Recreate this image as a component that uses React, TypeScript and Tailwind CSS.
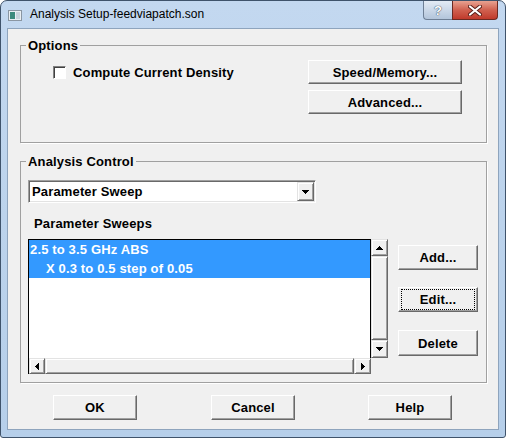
import React from "react";

type BtnProps = { label: string; className?: string; focus?: boolean };

const raised =
  "bg-[#f0f0f0] border border-t-white border-l-white border-b-[#696969] border-r-[#696969] shadow-[inset_-1px_-1px_0_#a0a0a0]";

const Btn = ({ label, className = "", focus = false }: BtnProps) => (
  <button
    className={`relative flex items-center justify-center text-[13px] font-bold leading-[15px] tracking-[0.15px] text-black ${raised} ${className}`}
  >
    {label}
    {focus && (
      <span className="absolute left-[2px] right-[2px] top-[1px] bottom-[1px] border border-dotted border-black" />
    )}
  </button>
);

const Arrow = ({ dir }: { dir: "up" | "down" | "left" | "right" }) => {
  const pts = {
    up: "0,4 7,4 3.5,0",
    down: "0,0 7,0 3.5,4",
    left: "4,0 4,7 0,3.5",
    right: "0,0 0,7 4,3.5",
  }[dir];
  const w = dir === "up" || dir === "down" ? 7 : 4;
  const h = dir === "up" || dir === "down" ? 4 : 7;
  return (
    <svg width={w} height={h} viewBox={`0 0 ${w} ${h}`} shapeRendering="crispEdges">
      <polygon points={pts} fill="#000" />
    </svg>
  );
};

const ScrollPart = ({ className = "", children }: { className?: string; children?: React.ReactNode }) => (
  <div
    className={`flex items-center justify-center bg-[#f0f0f0] border border-t-[#e3e3e3] border-l-[#e3e3e3] border-b-[#696969] border-r-[#696969] shadow-[inset_1px_1px_0_#fff,inset_-1px_-1px_0_#a0a0a0] ${className}`}
  >
    {children}
  </div>
);

const Group = ({ title, children, className = "" }: { title: string; children: React.ReactNode; className?: string }) => (
  <fieldset className={`mx-0 border border-[#a0a0a0] shadow-[1px_1px_0_#fff] ${className}`}>
    <legend className="ml-[5px] px-[2px] text-[13px] font-bold leading-[15px] tracking-[0.15px] text-black">
      {title}
    </legend>
    {children}
  </fieldset>
);

export default function App() {
  return (
    <div className="w-[506px] h-[438px] bg-white font-['Liberation_Sans',Arial,sans-serif] text-black">
      <div className="flex h-full flex-col rounded-t-[7px] rounded-b-[3px] border border-[#3f536b] bg-gradient-to-b from-[#c3d8f0] via-[#bcd3ec] to-[#b6cfea] px-[6px] pb-[7px]">
        {/* Title bar */}
        <div className="flex h-[27px] items-start">
          <svg className="ml-[1px] mt-[9px]" width="14" height="11" viewBox="0 0 14 11" shapeRendering="crispEdges">
            <rect x="0.5" y="0.5" width="13" height="10" fill="#e9eef3" stroke="#8a96a3" />
            <rect x="2" y="2" width="5" height="7" fill="#3d8a7d" />
            <rect x="8" y="2" width="4" height="7" fill="#c9d3dc" />
          </svg>
          <span className="ml-[8px] mt-[6px] text-[12px] leading-[15px] text-black">
            Analysis Setup-feedviapatch.son
          </span>
          <div className="ml-auto mr-[1px] flex h-[19px]">
            <div className="flex w-[29px] items-center justify-center rounded-bl-[4px] border border-t-0 border-r-0 border-[#6e7f95] bg-gradient-to-b from-[#e3ebf5] to-[#b3c5db] text-[13px] font-bold leading-none text-white [text-shadow:0_0_1px_#33475f,0_0_1px_#33475f]">
              ?
            </div>
            <div className="flex w-[46px] items-center justify-center rounded-br-[4px] border border-t-0 border-[#6b2a22] bg-gradient-to-b from-[#e8a291] via-[#d0604f] to-[#c0392b]">
              <svg width="14" height="11" viewBox="0 0 14 11">
                <path d="M2 1.5 L12 9.5 M12 1.5 L2 9.5" stroke="#5a1f18" strokeWidth="4" strokeLinecap="round" />
                <path d="M2 1.5 L12 9.5 M12 1.5 L2 9.5" stroke="#fff" strokeWidth="2.2" strokeLinecap="round" />
              </svg>
            </div>
          </div>
        </div>

        {/* Client area */}
        <div className="flex flex-1 flex-col border border-[#8ea4bd] bg-[#f0f0f0] pl-[12px] pr-[11px] pt-[9px]">
          <Group title="Options" className="h-[105px]">
            <div className="flex justify-between pl-[32px] pr-[24px] pt-[7px]">
              <div className="flex h-[24px] items-center">
                <span className="h-[13px] w-[13px] border border-t-[#808080] border-l-[#808080] border-b-white border-r-white bg-white shadow-[inset_1px_1px_0_#404040]" />
                <span className="ml-[7px] text-[13px] font-bold leading-[15px] tracking-[0.15px]">
                  Compute Current Density
                </span>
              </div>
              <div className="flex flex-col gap-[6px]">
                <Btn label="Speed/Memory..." className="h-[24px] w-[154px]" />
                <Btn label="Advanced..." className="h-[24px] w-[154px]" />
              </div>
            </div>
          </Group>

          <Group title="Analysis Control" className="mt-[11px] h-[229px]">
            <div className="pl-[7px] pt-[11px]">
              <div className="flex h-[23px] w-[288px] border border-t-[#a0a0a0] border-l-[#a0a0a0] border-b-white border-r-white bg-white shadow-[inset_1px_1px_0_#696969,inset_-1px_-1px_0_#e3e3e3]">
                <span className="flex-1 pl-[3px] pt-[3px] text-[13px] font-bold leading-[15px] tracking-[0.15px]">
                  Parameter Sweep
                </span>
                <ScrollPart className="my-[1px] mr-[1px] w-[17px]">
                  <Arrow dir="down" />
                </ScrollPart>
              </div>
              <div className="mt-[13px] pl-[6px] text-[13px] font-bold leading-[15px] tracking-[0.15px]">
                Parameter Sweeps
              </div>
              <div className="mt-[8px] flex items-start">
                <div className="grid w-[360px] grid-cols-[343px_17px] grid-rows-[119px_16px]">
                  <div className="border border-b-0 border-black bg-white text-[13px] font-bold leading-[19px] tracking-[0.15px] text-white">
                    <div className="bg-[#3399ff] pl-[1px]">2.5 to 3.5 GHz ABS</div>
                    <div className="bg-[#3399ff] pl-[17px]">X 0.3 to 0.5 step of 0.05</div>
                  </div>
                  <div className="flex flex-col">
                    <ScrollPart className="h-[17px]">
                      <Arrow dir="up" />
                    </ScrollPart>
                    <ScrollPart className="flex-1" />
                    <ScrollPart className="h-[18px]">
                      <Arrow dir="down" />
                    </ScrollPart>
                  </div>
                  <div className="flex border-l border-black">
                    <ScrollPart className="w-[16px]">
                      <Arrow dir="left" />
                    </ScrollPart>
                    <ScrollPart className="flex-1" />
                    <ScrollPart className="w-[17px]">
                      <Arrow dir="right" />
                    </ScrollPart>
                  </div>
                  <div />
                </div>
                <div className="ml-[10px] flex flex-col pt-[6px]">
                  <Btn label="Add..." className="h-[25px] w-[80px]" />
                  <Btn label="Edit..." className="mt-[17px] h-[25px] w-[80px]" focus />
                  <Btn label="Delete" className="mt-[18px] h-[26px] w-[80px]" />
                </div>
              </div>
            </div>
          </Group>

          <div className="mt-[12px] flex pl-[33px]">
            <Btn label="OK" className="h-[25px] w-[84px]" />
            <Btn label="Cancel" className="ml-[74px] h-[25px] w-[84px]" />
            <Btn label="Help" className="ml-[73px] h-[25px] w-[84px]" />
          </div>
        </div>
      </div>
    </div>
  );
}
